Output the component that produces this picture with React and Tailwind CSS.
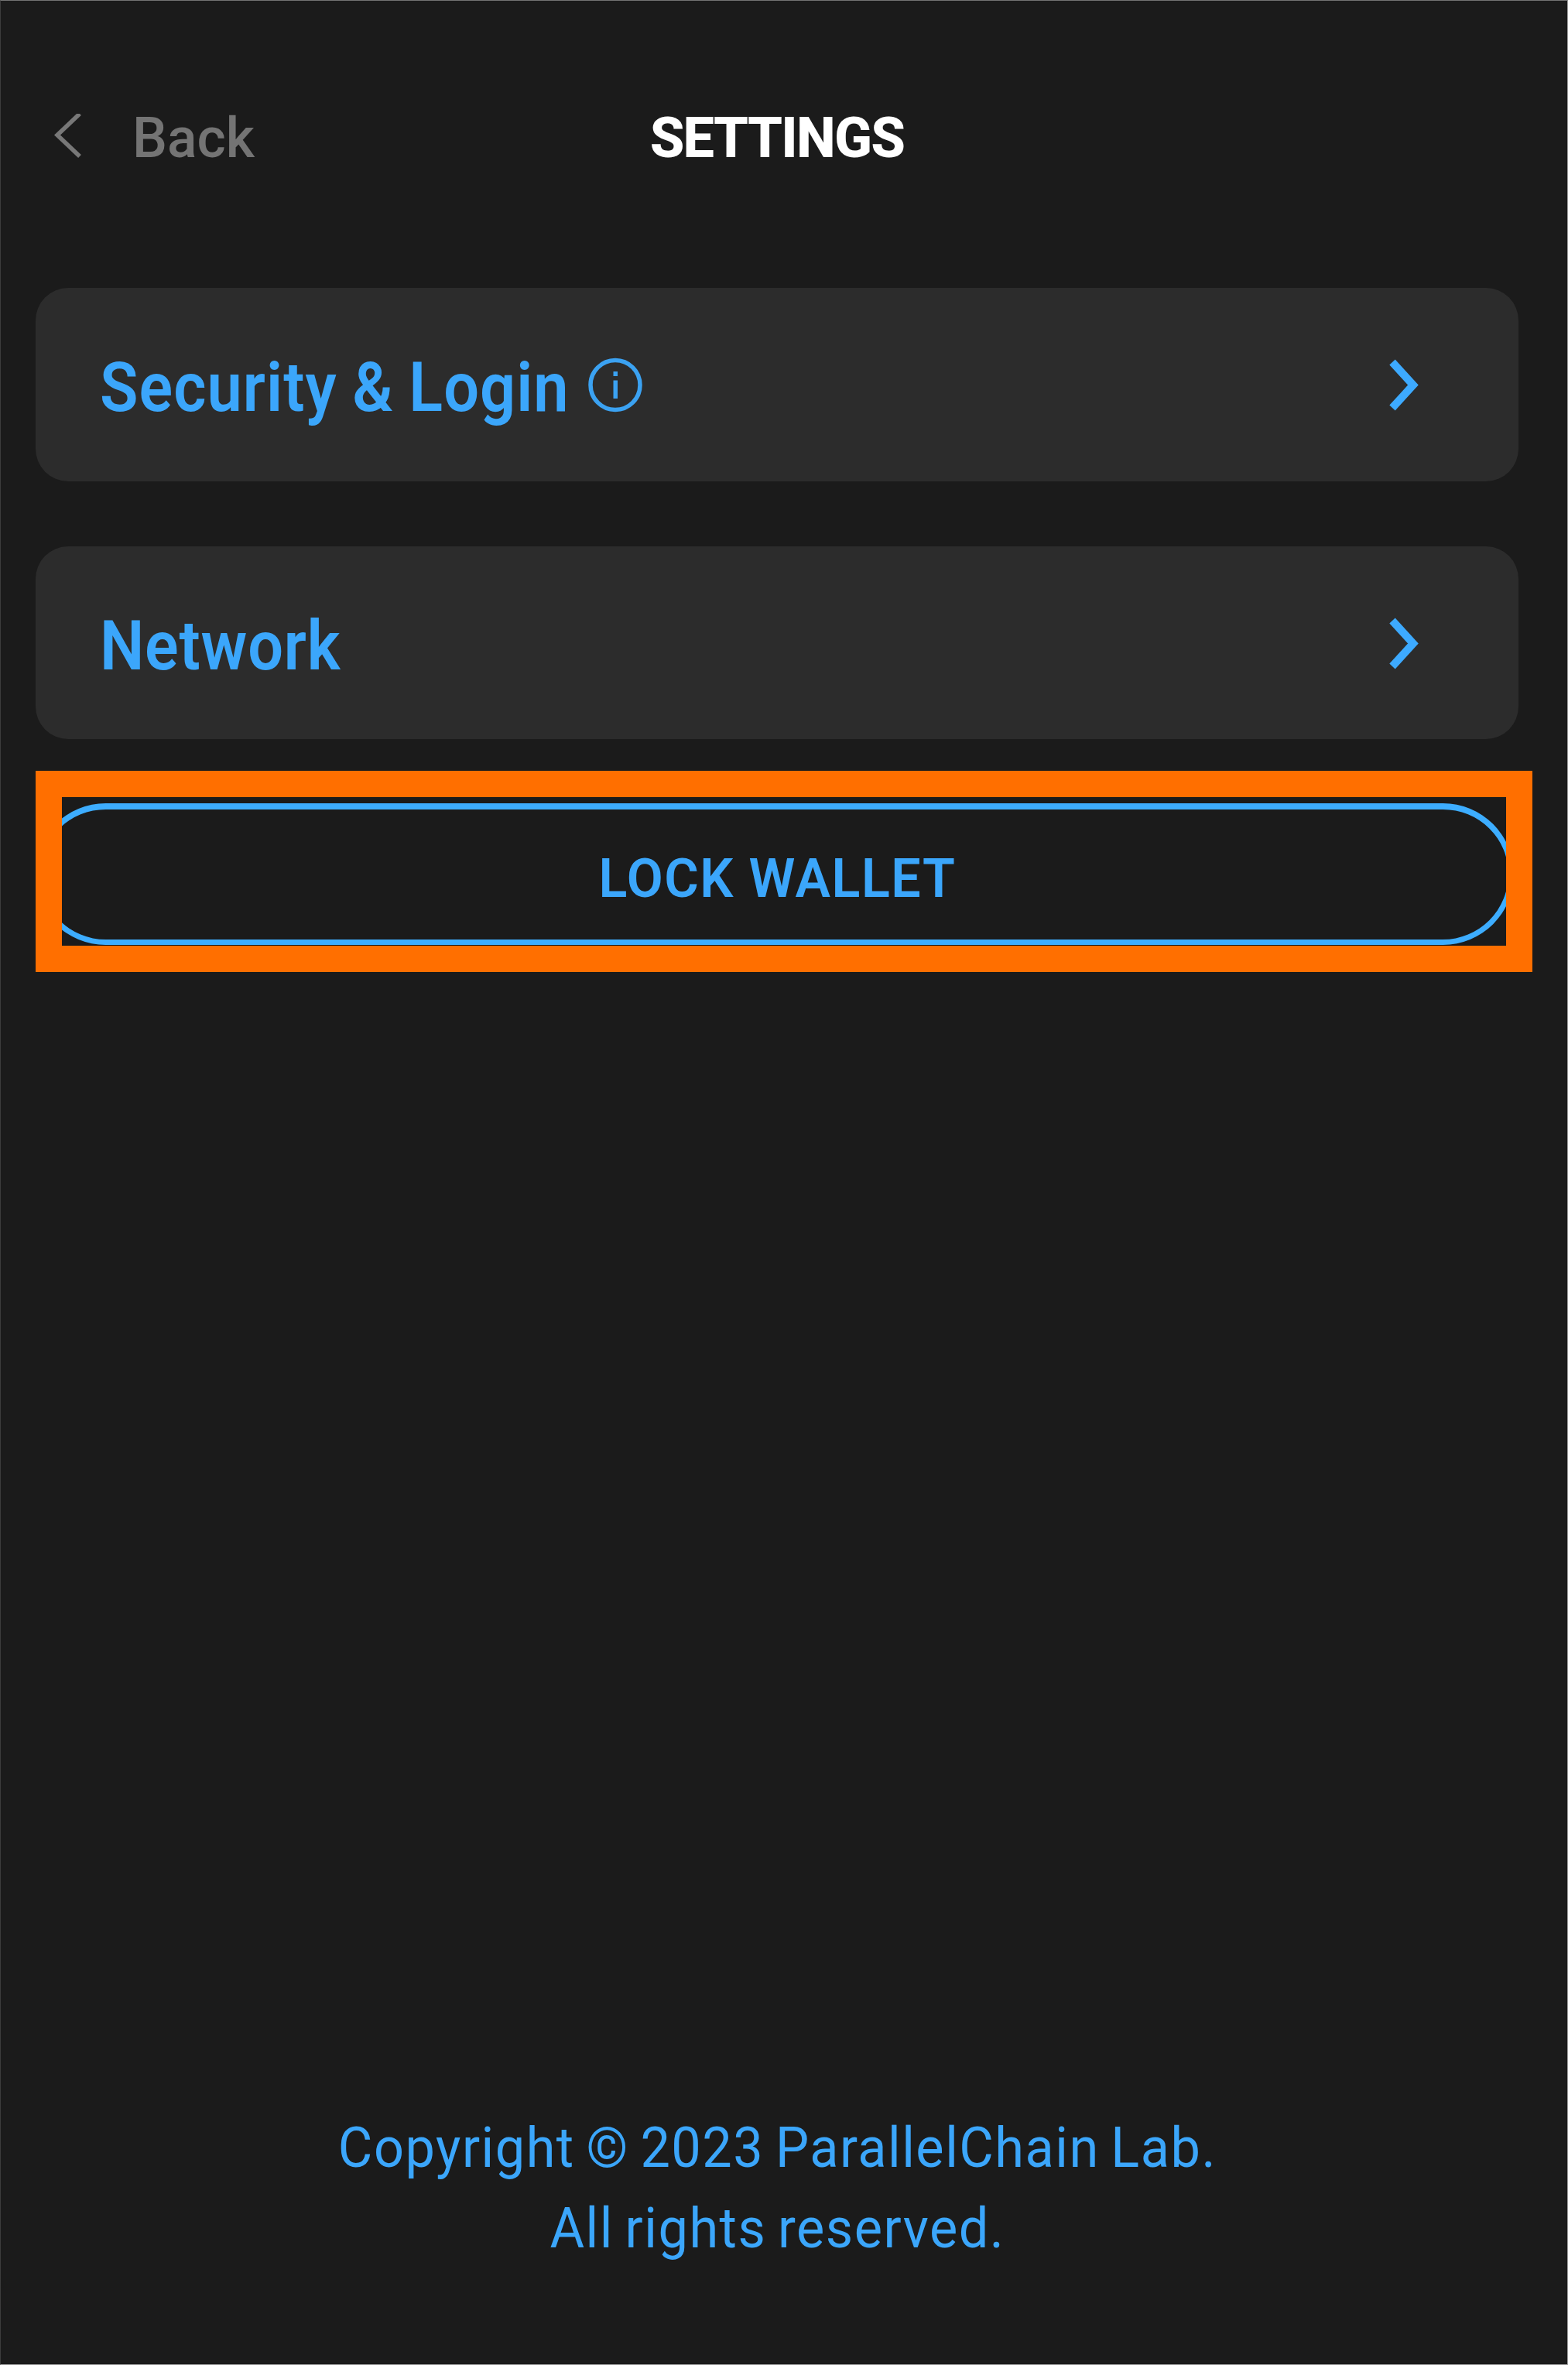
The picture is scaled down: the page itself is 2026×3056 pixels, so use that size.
import React from 'react';

function ChevronRight() {
  return (
    <svg className="w-[48px] h-[76px] shrink-0" viewBox="0 0 48 76" fill="none">
      <path d="M10 9 L37 38.5 L10 68" stroke="#3daaff" strokeWidth="10" />
    </svg>
  );
}

function InfoIcon() {
  return (
    <svg className="w-[74px] h-[74px] shrink-0" viewBox="0 0 74 74" fill="none">
      <circle cx="37" cy="37.5" r="32" stroke="#3ba2f2" strokeWidth="5.5" />
      <rect x="34.5" y="20" width="5.5" height="6" fill="#3ba2f2" />
      <rect x="34.5" y="31.5" width="5.5" height="23.5" fill="#3ba2f2" />
    </svg>
  );
}

function SettingsRow({ className, children }) {
  return (
    <button
      className={`flex w-[1916px] items-center rounded-[42px] bg-[#2c2c2c] pl-[83px] pr-[125px] text-left ${className}`}
    >
      {children}
      <span className="flex-1" />
      <ChevronRight />
    </button>
  );
}

export default function App() {
  return (
    <div className="flex h-[3056px] w-[2026px] flex-col border border-t-[#747474] border-r-[#9c9c9c] border-b-[#9c9c9c] border-l-[#3c3c3c] bg-[#1b1b1b] pl-[45px] font-['Roboto',sans-serif] text-[#3ba6fb]">
      <header className="mt-[135px] grid h-[86px] w-[1916px] grid-cols-3 items-center text-[72px] leading-[86px]">
        <button className="flex items-center pl-[20px] text-[#747474]">
          <svg className="h-[64px] w-[44px]" viewBox="0 0 44 64" fill="none">
            <path d="M37 0 L8 27.5 L37 55" stroke="#787878" strokeWidth="5.5" />
          </svg>
          <span className="ml-[61px] font-medium tracking-[0px] origin-left scale-x-[0.99]">Back</span>
        </button>
        <h1 className="text-center font-extrabold tracking-[-1.7px] text-white">SETTINGS</h1>
      </header>

      <main className="mt-[150px] flex flex-col">
        <SettingsRow className="h-[250px]">
          <span className="origin-left scale-x-[0.91] pt-[8px] text-[89px] leading-[100px] font-semibold tracking-[1.2px] [word-spacing:-2px] whitespace-nowrap">
            Security &amp; Login
          </span>
          <span className="-ml-[38px]">
            <InfoIcon />
          </span>
        </SettingsRow>
        <SettingsRow className="mt-[84px] h-[249px]">
          <span className="origin-left scale-x-[0.91] pt-[8px] text-[89px] leading-[100px] font-semibold tracking-[0.9px] whitespace-nowrap">
            Network
          </span>
        </SettingsRow>

        <div className="mt-[41px] h-[260px] w-[1934px] overflow-hidden border-[34px] border-[#ff6f00]">
          <button className="mt-[8px] -ml-[35px] flex h-[183px] w-[1911px] items-center justify-center rounded-full border-[7px] border-t-[8px] border-[#3dadff]">
            <span className="scale-x-[0.96] pt-[9px] pl-[8px] text-[71px] leading-[86px] font-semibold tracking-[1.6px]">
              LOCK WALLET
            </span>
          </button>
        </div>
      </main>

      <footer className="mt-auto mb-[123px] flex w-[1916px] flex-col items-center text-[72px] leading-[104px] font-[450] [word-spacing:-4px]">
        <p className="scale-x-[0.95] tracking-[1.6px] whitespace-nowrap">Copyright © 2023 ParallelChain Lab.</p>
        <p className="scale-x-[0.95] tracking-[1.6px] whitespace-nowrap">All rights reserved.</p>
      </footer>
    </div>
  );
}
